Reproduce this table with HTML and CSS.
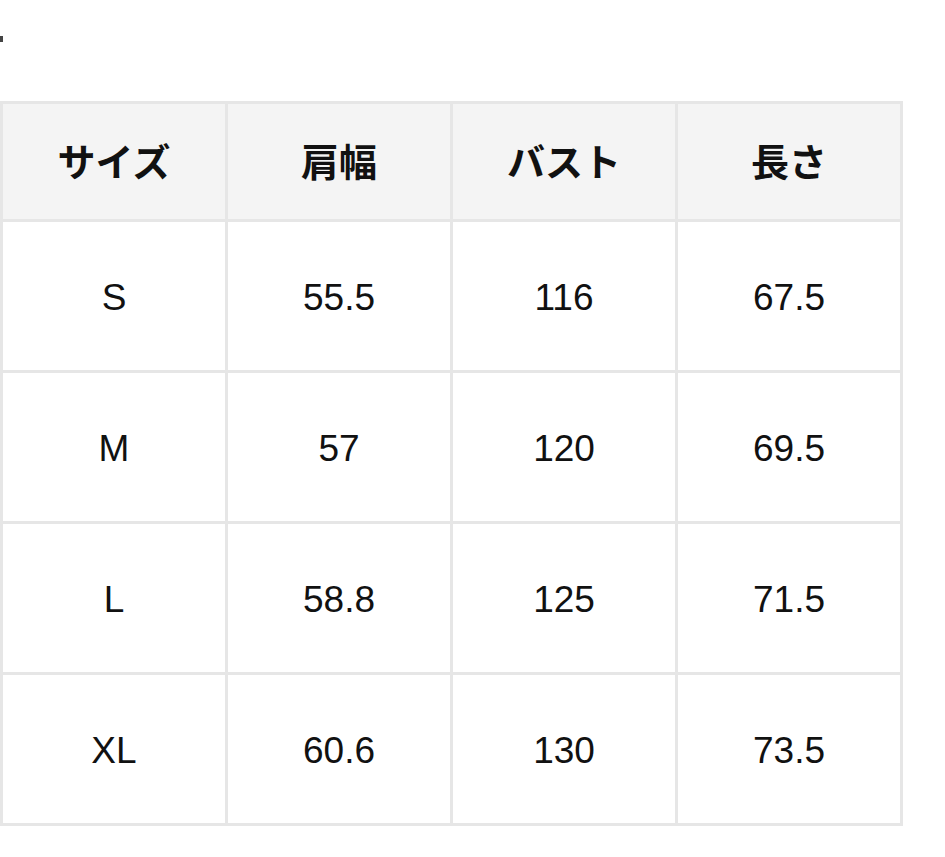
FILE: index.html
```html
<!DOCTYPE html>
<html lang="ja">
<head>
<meta charset="utf-8">
<title>サイズ表</title>
<link rel="stylesheet" href="styles.css">
</head>
<body class="page">
  <div class="mark"></div>
  <table class="size-table">
    <colgroup>
      <col class="col"><col class="col"><col class="col"><col class="col">
    </colgroup>
    <thead>
      <tr class="head-row">
        <th class="head-cell">サイズ</th>
        <th class="head-cell">肩幅</th>
        <th class="head-cell">バスト</th>
        <th class="head-cell">長さ</th>
      </tr>
    </thead>
    <tbody>
      <tr class="body-row">
        <td class="cell">S</td><td class="cell">55.5</td><td class="cell">116</td><td class="cell">67.5</td>
      </tr>
      <tr class="body-row">
        <td class="cell">M</td><td class="cell">57</td><td class="cell">120</td><td class="cell">69.5</td>
      </tr>
      <tr class="body-row">
        <td class="cell">L</td><td class="cell">58.8</td><td class="cell">125</td><td class="cell">71.5</td>
      </tr>
      <tr class="body-row">
        <td class="cell">XL</td><td class="cell">60.6</td><td class="cell">130</td><td class="cell">73.5</td>
      </tr>
    </tbody>
  </table>
</body>
</html>
```

FILE: styles.css
```css
html, body {
  margin: 0;
  padding: 0;
  background: #ffffff;
}

.page {
  font-family: "Liberation Sans", Arial, "Noto Sans CJK JP", sans-serif;
  color: #111111;
}

.mark {
  width: 3px;
  height: 6px;
  margin-top: 36px;
  background: #444444;
}

.size-table {
  margin-top: 59px;
  width: 903px;
  table-layout: fixed;
  border-collapse: separate;
  border-spacing: 0;
  border-top: 3px solid #e6e6e6;
  border-left: 3px solid #e6e6e6;
}

.col {
  width: 225px;
}

.head-cell,
.cell {
  box-sizing: border-box;
  text-align: center;
  vertical-align: middle;
  border-right: 3px solid #e6e6e6;
  border-bottom: 3px solid #e6e6e6;
}

.head-cell {
  height: 118px;
  padding: 0 0 4px 0;
  background: #f4f4f4;
  font-family: "Noto Sans CJK JP", sans-serif;
  font-weight: 700;
  font-size: 38px;
  color: #111111;
}

.cell {
  height: 151px;
  padding: 4px 0 0 0;
  font-size: 37px;
  font-weight: 400;
  color: #111111;
}
```
